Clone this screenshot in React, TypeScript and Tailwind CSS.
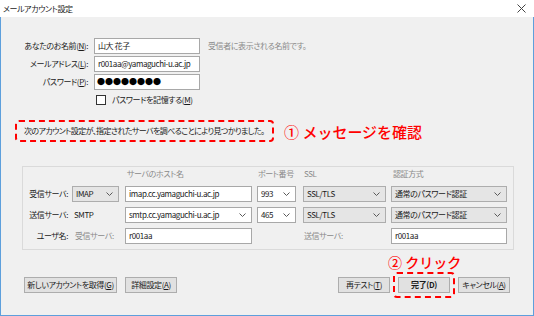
import React from 'react';

const F = "font-['Noto_Sans_CJK_JP','Noto_Sans_CJK_SC',sans-serif] [font-feature-settings:'palt']";

function Chevron() {
  return (
    <svg width="7" height="4" viewBox="0 0 7 4" className="shrink-0">
      <polyline points="0.5,0.5 3.5,3.5 6.5,0.5" fill="none" stroke="#5a5a5a" strokeWidth="1" />
    </svg>
  );
}

// combo / dropdown box
function Select({ text, className, gray }: { text: string; className: string; gray?: boolean }) {
  return (
    <div
      className={`h-[16px] flex items-center justify-between pl-[3px] pr-[5px] border ${
        gray ? 'bg-[#e5e5e5] border-[#adadad]' : 'bg-white border-[#a8a8a8]'
      } ${className}`}
    >
      <span>{text}</span>
      <Chevron />
    </div>
  );
}

function Input({ text, className }: { text: string; className: string }) {
  return (
    <div className={`h-[16px] flex items-center px-[3px] overflow-hidden bg-white border border-[#a8a8a8] ${className}`}>
      {text}
    </div>
  );
}

function Btn({ children, className = '' }: { children: React.ReactNode; className?: string }) {
  return (
    <div
      className={`h-[16px] flex items-center justify-center bg-[#e1e1e1] border border-[#adadad] ${className}`}
    >
      {children}
    </div>
  );
}

function FormRow({ label, children }: { label: React.ReactNode; children: React.ReactNode }) {
  return (
    <div className="flex items-center h-[16px]">
      <div className="w-[87px] text-right">{label}</div>
      {children}
    </div>
  );
}

export default function App() {
  return (
    <div
      className={`w-[534px] h-[316px] flex flex-col bg-white text-[8px] leading-none tracking-[-0.4px] whitespace-nowrap text-[#1a1a1a] ${F}`}
    >
      {/* title bar */}
      <div className="h-[17px] shrink-0 flex items-center justify-between pl-[3px] pr-[8px] bg-white">
        <span>メールアカウント設定</span>
        <svg width="9" height="9" viewBox="0 0 9 9">
          <path d="M0.5 0.5 L8.5 8.5 M8.5 0.5 L0.5 8.5" stroke="#444" strokeWidth="1" />
        </svg>
      </div>

      <div className="flex-1 flex flex-col bg-[#f0f0f0] border-l border-r border-b border-[#5d9fdc]">
        {/* account fields */}
        <div className="mt-[21px] flex flex-col gap-[2px]">
          <FormRow label={<>あなたのお名前(<u>N</u>):</>}>
            <Input text="山大 花子" className="ml-[6px] w-[106px]" />
            <span className="ml-[8px] text-[#8a8a8a]">受信者に表示される名前です。</span>
          </FormRow>
          <FormRow label={<>メールアドレス(<u>L</u>):</>}>
            <Input text="r001aa@yamaguchi-u.ac.jp" className="ml-[6px] w-[106px]" />
          </FormRow>
          <FormRow label={<>パスワード(<u>P</u>):</>}>
            <div className="ml-[6px] w-[106px] h-[16px] flex items-center px-[2px] bg-white border border-[#a8a8a8] text-[8px] tracking-normal text-black [font-feature-settings:normal]">
              ●●●●●●●●
            </div>
          </FormRow>
        </div>

        <div className="mt-[4px] h-[12px] flex items-center pl-[95px]">
          <div className="w-[10px] h-[10px] bg-white border border-[#333]" />
          <span className="ml-[6px]">
            パスワードを記憶する(<u>M</u>)
          </span>
        </div>

        {/* message + annotation */}
        <div className="mt-[14px] ml-[14px] flex items-center">
          <div className="w-[259px] h-[22px] flex items-center pl-[7px] border-2 border-dashed border-[#ff0000] rounded-[4px] tracking-[-0.6px]">
            次のアカウント設定が、指定されたサーバを調べることにより見つかりました。
          </div>
          <span className="ml-[10px] text-[15px] font-medium text-[#ff0000] tracking-normal [font-feature-settings:normal]">
            ① メッセージを確認
          </span>
        </div>

        {/* server settings panel */}
        <div className="mt-[24px] ml-[21px] w-[492px] border border-[#dadada] pb-[5px] grid grid-cols-[49px_53px_132px_46px_88px_116px] gap-y-[5px] items-center">
          <div className="h-[14px]" />
          <div />
          <div className="pl-[2px] text-[#8a8a8a]">サーバのホスト名</div>
          <div className="pl-[1px] text-[#8a8a8a]">ポート番号</div>
          <div className="pl-[1px] text-[#8a8a8a]">SSL</div>
          <div className="pl-[2px] text-[#8a8a8a]">認証方式</div>

          <div className="text-right pr-[4px]">受信サーバ:</div>
          <Select text="IMAP" gray className="w-[47px]" />
          <Input text="imap.cc.yamaguchi-u.ac.jp" className="w-[127px]" />
          <Select text="993" className="w-[39px]" />
          <Select text="SSL/TLS" gray className="w-[83px]" />
          <Select text="通常のパスワード認証" gray className="w-[116px]" />

          <div className="text-right pr-[4px]">送信サーバ:</div>
          <div className="pl-[2px]">SMTP</div>
          <Select text="smtp.cc.yamaguchi-u.ac.jp" className="w-[127px]" />
          <Select text="465" className="w-[39px]" />
          <Select text="SSL/TLS" gray className="w-[83px]" />
          <Select text="通常のパスワード認証" gray className="w-[116px]" />

          <div className="text-right pr-[4px]">ユーザ名:</div>
          <div className="pl-[3px] text-[#8a8a8a]">受信サーバ:</div>
          <Input text="r001aa" className="w-[127px]" />
          <div />
          <div className="pl-[1px] text-[#8a8a8a]">送信サーバ:</div>
          <Input text="r001aa" className="w-[116px]" />
        </div>

        {/* buttons */}
        <div className="mt-[22px] flex items-center justify-between">
          <div className="ml-[23px] flex items-center gap-[8px]">
            <Btn className="w-[93px]">
              新しいアカウントを取得(<u>G</u>)
            </Btn>
            <Btn className="w-[52px]">
              詳細設定(<u>A</u>)
            </Btn>
          </div>
          <div className="mr-[23px] flex items-center">
            <Btn className="w-[52px] border-[#2f86d8]">
              再テスト(<u>T</u>)
            </Btn>
            <div className="relative ml-[3px] p-[3px] border-2 border-dashed border-[#ff0000] rounded-[4px]">
              <span className="absolute left-[-7px] top-[-20px] text-[14px] leading-[16px] font-medium text-[#ff0000] tracking-normal [font-feature-settings:normal]">
                ② クリック
              </span>
              <Btn className="w-[52px] font-bold">完了(D)</Btn>
            </div>
            <Btn className="ml-[3px] w-[52px]">
              キャンセル(<u>A</u>)
            </Btn>
          </div>
        </div>
      </div>
    </div>
  );
}
